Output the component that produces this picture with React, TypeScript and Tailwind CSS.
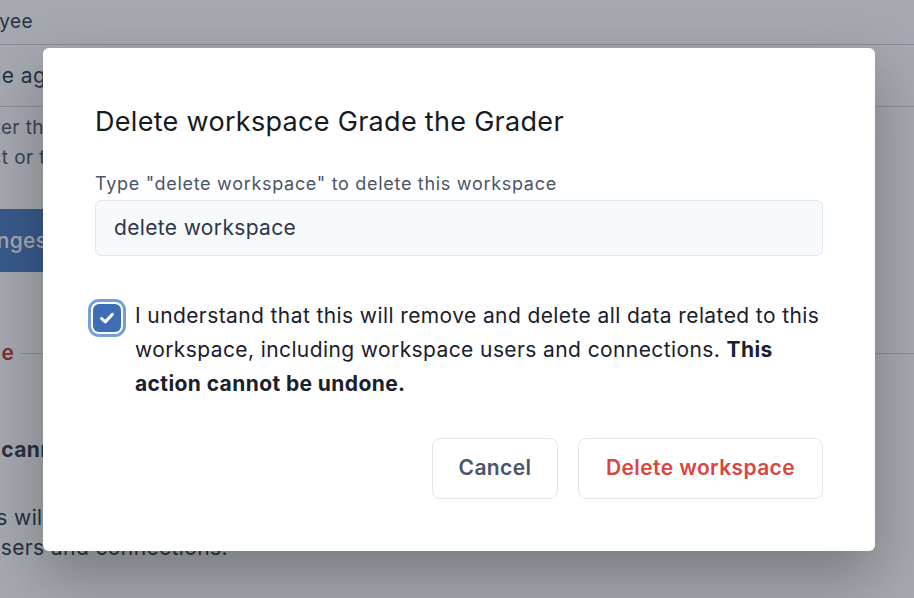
import React from "react";

export default function App() {
  return (
    <div className="relative h-screen w-full overflow-hidden bg-white font-['Inter','Noto_Sans',sans-serif] tracking-[0.4px]">
      {/* background page */}
      <div className="flex flex-col text-[#2d3748]">
        <div className="mt-[8px] -ml-[58px] whitespace-nowrap text-[19px] leading-[28px] text-[#2d3748]">Employee</div>
        <div className="mt-[8px] flex h-[63px] items-center border-y border-[#cbd5e0] whitespace-nowrap text-[21px]">
          <span className="-ml-[48px]">Grade agents in the workspace</span>
        </div>
        <div className="mt-[6px] -ml-[29px] whitespace-nowrap text-[19px] leading-[30px] text-[#4a5568]">Enter the name of the agent</div>
        <div className="-ml-[57px] whitespace-nowrap text-[19px] leading-[30px] text-[#4a5568]">project or team for this workspace</div>
        <div className="mt-[36px] -ml-[122px] flex h-[63px] w-[190px] items-center rounded-[6px] bg-[#4a7cc4] pl-[24px] whitespace-nowrap text-[21px] font-medium text-white">Save changes</div>
        <div className="mt-[66px] flex items-center whitespace-nowrap">
          <span className="-ml-[119px] text-[21px] font-semibold leading-[30px] text-[#c53030]">Danger zone</span>
          <div className="ml-[6px] h-px flex-1 bg-[#cbd5e0]" />
        </div>
        <div className="mt-[67px] -ml-[122px] whitespace-nowrap text-[21px] font-bold leading-[30px] text-[#2d3748]">This action cannot be undone.</div>
        <div className="mt-[38px] -ml-[36px] whitespace-nowrap text-[21px] leading-[30px]">This will remove and delete all data related to this</div>
        <div className="flex w-[228px] justify-end whitespace-nowrap text-[21px] leading-[30px]">
          <span>workspace users and connections.</span>
        </div>
      </div>

      {/* overlay */}
      <div className="absolute inset-0 flex items-center bg-[#1f2937]/40 pl-[43px]">
        <div className="flex h-[503px] w-[832px] flex-col rounded-[6px] bg-white px-[52px] pt-[58px] pb-[52px] shadow-[0_25px_60px_rgba(0,0,0,0.28)]">
          <h2 className="text-[27px] font-normal leading-[32px] tracking-[0.3px] text-[#171a21]">Delete workspace Grade the Grader</h2>
          <label className="mt-[34px] text-[18px] leading-[24px] tracking-[0.7px] text-[#4a5568]">Type "delete workspace" to delete this workspace</label>
          <div className="mt-[4px] flex h-[56px] items-center rounded-[6px] border border-[#e2e8f0] bg-[#f7f9fb] px-[18px] text-[21px] tracking-[0.35px] text-[#2d3748]">delete workspace</div>
          <div className="mt-[43px] flex gap-[14px]">
            <div className="-ml-[2px] mt-[5px] flex h-[28px] w-[28px] flex-none items-center justify-center rounded-[6px] bg-[#3d6eb4] ring-[3px] ring-[#76a0d4] ring-offset-[2px] ring-offset-white">
              <svg width="20" height="20" viewBox="0 0 20 20" fill="none">
                <path d="M4.5 10.5l3.8 3.4 7.2-7.6" stroke="white" strokeWidth="3" strokeLinecap="round" strokeLinejoin="round" />
              </svg>
            </div>
            <p className="text-[21px] leading-[34px] tracking-[0.4px] text-[#1a202c]">
              I understand that this will remove and delete all data related to this workspace, including workspace users and connections. <strong className="font-bold">This action cannot be undone.</strong>
            </p>
          </div>
          <div className="mt-auto flex justify-end gap-[20px]">
            <button className="flex h-[61px] w-[126px] items-center justify-center rounded-[8px] border border-[#e2e8f0] bg-white text-[21px] font-semibold tracking-[0.4px] text-[#4a5568]">Cancel</button>
            <button className="flex h-[61px] w-[245px] items-center justify-center rounded-[8px] border border-[#e2e8f0] bg-white text-[21px] font-semibold tracking-[0.4px] text-[#d9463f]">Delete workspace</button>
          </div>
        </div>
      </div>
    </div>
  );
}
